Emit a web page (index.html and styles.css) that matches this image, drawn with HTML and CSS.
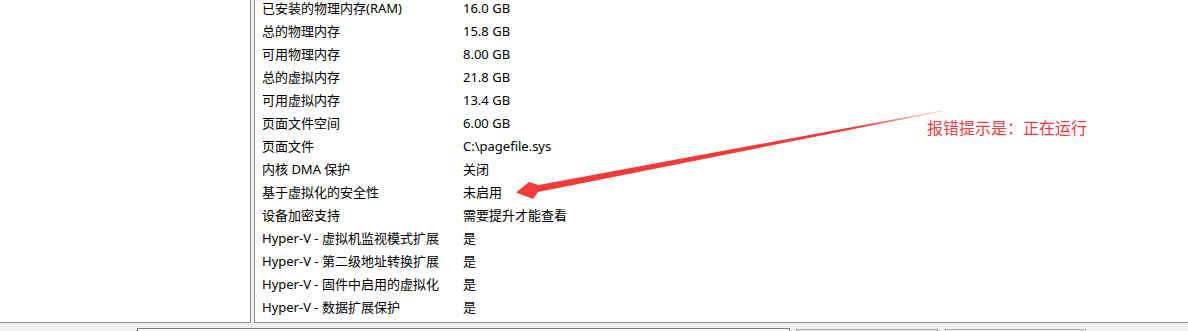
FILE: index.html
```html
<!DOCTYPE html>
<html lang="zh-CN">
<head>
  <meta charset="UTF-8">
  <meta name="viewport" content="width=device-width, initial-scale=1.0">
  <title>系统信息</title>
  <link rel="stylesheet" href="styles.css">
</head>
<body>
  <div class="panes">
    <div class="tree"></div>
    <div class="list">
      <table class="items">
        <tr><td class="name">已安装的物理内存(RAM)</td><td>16.0 GB</td></tr>
        <tr><td class="name">总的物理内存</td><td>15.8 GB</td></tr>
        <tr><td class="name">可用物理内存</td><td>8.00 GB</td></tr>
        <tr><td class="name">总的虚拟内存</td><td>21.8 GB</td></tr>
        <tr><td class="name">可用虚拟内存</td><td>13.4 GB</td></tr>
        <tr><td class="name">页面文件空间</td><td>6.00 GB</td></tr>
        <tr><td class="name">页面文件</td><td>C:\pagefile.sys</td></tr>
        <tr><td class="name">内核 DMA 保护</td><td>关闭</td></tr>
        <tr><td class="name">基于虚拟化的安全性</td><td>未启用</td></tr>
        <tr><td class="name">设备加密支持</td><td>需要提升才能查看</td></tr>
        <tr><td class="name">Hyper-V - 虚拟机监视模式扩展</td><td>是</td></tr>
        <tr><td class="name">Hyper-V - 第二级地址转换扩展</td><td>是</td></tr>
        <tr><td class="name">Hyper-V - 固件中启用的虚拟化</td><td>是</td></tr>
        <tr><td class="name">Hyper-V - 数据扩展保护</td><td>是</td></tr>
      </table>
    </div>
  </div>

  <div class="findbar">
    <div class="find-input"></div>
    <div class="find-btn"></div>
    <div class="find-btn light"></div>
  </div>

  <!-- annotation drawn over the screenshot -->
  <svg class="arrow" width="1188" height="331" viewBox="0 0 1188 331">
    <defs>
      <linearGradient id="fade" x1="516" y1="0" x2="942" y2="0" gradientUnits="userSpaceOnUse">
        <stop offset="0" stop-color="#f23a3a"/>
        <stop offset="0.8" stop-color="#f23a3a"/>
        <stop offset="1" stop-color="#f23a3a" stop-opacity="0.2"/>
      </linearGradient>
    </defs>
    <polygon fill="url(#fade)" points="516,192.5 529,182 538.5,185 942,110.5 942,111.5 538,192 533,199"/>
  </svg>
  <div class="note">报错提示是：正在运行</div>
</body>
</html>
```

FILE: styles.css
```css
html {
  overflow: hidden;
}
body {
  margin: 0;
  width: 1188px;
  height: 331px;
  overflow: hidden;
  background-color: #f0f0f0;
  font-family: "Noto Sans", "Noto Sans CJK SC", sans-serif;
  font-size: 13px;
  color: #000;
  position: relative;
}
.panes {
  display: flex;
  gap: 3px;
  height: 323px;
}
.tree {
  width: 251px;
  box-sizing: border-box;
  background-color: #fff;
  border-right: 1px solid #8c8c8c;
  border-bottom: 1px solid #8c8c8c;
}
.list {
  flex: 1;
  background-color: #fff;
  border-left: 1px solid #8c8c8c;
  border-bottom: 1px solid #8c8c8c;
  overflow: hidden;
  padding-left: 7px;
}
.items {
  border-collapse: collapse;
  margin-top: -3px;
}
.items td {
  height: 23px;
  padding: 0;
  white-space: nowrap;
  line-height: 23px;
}
.items .name {
  width: 201px;
}
.findbar {
  display: flex;
  height: 8px;
  overflow: hidden;
  padding-top: 5px;
  padding-left: 137px;
}
.find-input {
  flex: none;
  width: 653px;
  height: 20px;
  box-sizing: border-box;
  border: 1px solid #7a7a7a;
  background-color: #fff;
}
.find-btn {
  flex: none;
  width: 142px;
  height: 22px;
  margin-left: 6px;
  margin-top: 1px;
  box-sizing: border-box;
  border: 1px solid #adadad;
  background-color: #e1e1e1;
}
.find-btn.light {
  width: 141px;
  margin-left: 7px;
  background-color: #ececec;
}
.arrow {
  position: absolute;
  left: 0;
  top: 0;
}
.note {
  position: absolute;
  left: 927px;
  top: 117px;
  font-family: "Noto Sans CJK SC", sans-serif;
  font-size: 16px;
  line-height: 20px;
  color: #ee3d3d;
}
```
